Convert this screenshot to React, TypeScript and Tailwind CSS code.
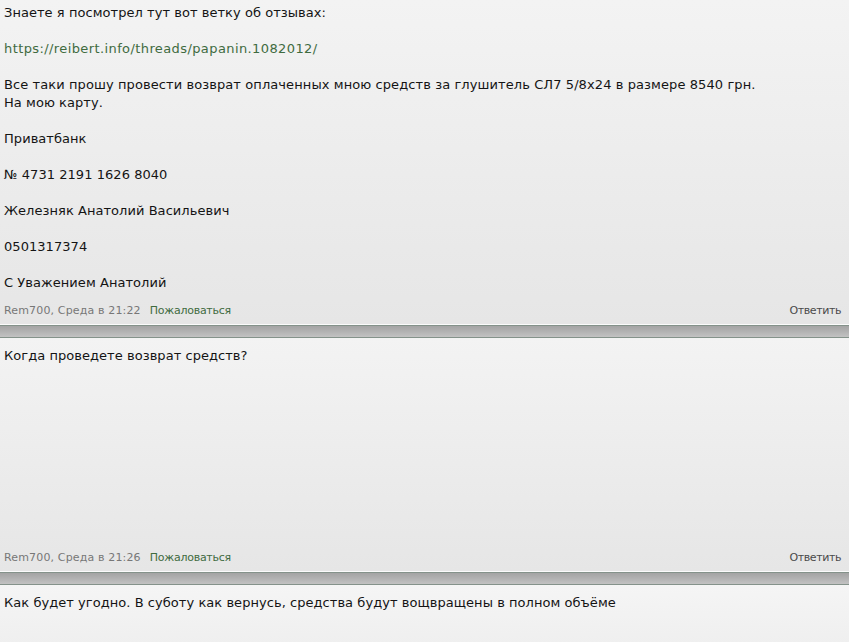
const Post = ({ first, children, time, minBody }: { first?: boolean; children: React.ReactNode; time: string; minBody?: string }) => (
  <div className={`bg-gradient-to-b from-[#f3f3f3] to-[#e6e6e6] border-b border-[#fbfbfb] px-1 ${first ? 'pt-1' : 'pt-[9px]'}`}>
    <div className={`text-[13px] leading-[18px] text-[#141414] tracking-[0.05px] ${minBody ?? ''}`}>{children}</div>
    <div className="flex items-center justify-between text-[11px] leading-[14px] mt-[12px] pb-[6px]">
      <div className="flex items-center">
        <span className="text-[#777] tracking-[0.15px]">Rem700, Среда в {time}</span>
        <a className="ml-[9px] text-[#3f6b3f] tracking-[-0.25px]">Пожаловаться</a>
      </div>
      <a className="text-[#4a4a4a] mr-[4px] tracking-[-0.4px]">Ответить</a>
    </div>
  </div>
);

const Divider = () => (
  <div className="h-[13px] border-t border-b border-[#84928a] bg-gradient-to-b from-[#a4a4a4] via-[#b2b2b2] to-[#c2c2c2]" />
);

export default function App() {
  return (
    <div className="w-[849px] h-[642px] overflow-hidden bg-[#f2f2f2]" style={{ fontFamily: '"DejaVu Sans", Verdana, sans-serif' }}>
      <Post first time="21:22">
        Знаете я посмотрел тут вот ветку об отзывах:<br />
        <br />
        <a className="text-[#3f6b3f] tracking-[0.4px]">https://reibert.info/threads/papanin.1082012/</a><br />
        <br />
        <span className="tracking-[0.09px]">Все таки прошу провести возврат оплаченных мною средств за глушитель СЛ7 5/8х24 в размере 8540 грн.</span><br />
        На мою карту.<br />
        <br />
        Приватбанк<br />
        <br />
        № 4731 2191 1626 8040<br />
        <br />
        Железняк Анатолий Васильевич<br />
        <br />
        0501317374<br />
        <br />
        С Уважением Анатолий
      </Post>
      <Divider />
      <Post time="21:26" minBody="min-h-[192px]">
        Когда проведете возврат средств?
      </Post>
      <Divider />
      <div className="bg-gradient-to-b from-[#f5f5f5] to-[#ededed] px-1 pt-[9px] h-[80px] text-[13px] leading-[18px] text-[#141414] tracking-[0.05px]">
        Как будет угодно. В суботу как вернусь, средства будут вощвращены в полном объёме
      </div>
    </div>
  );
}
